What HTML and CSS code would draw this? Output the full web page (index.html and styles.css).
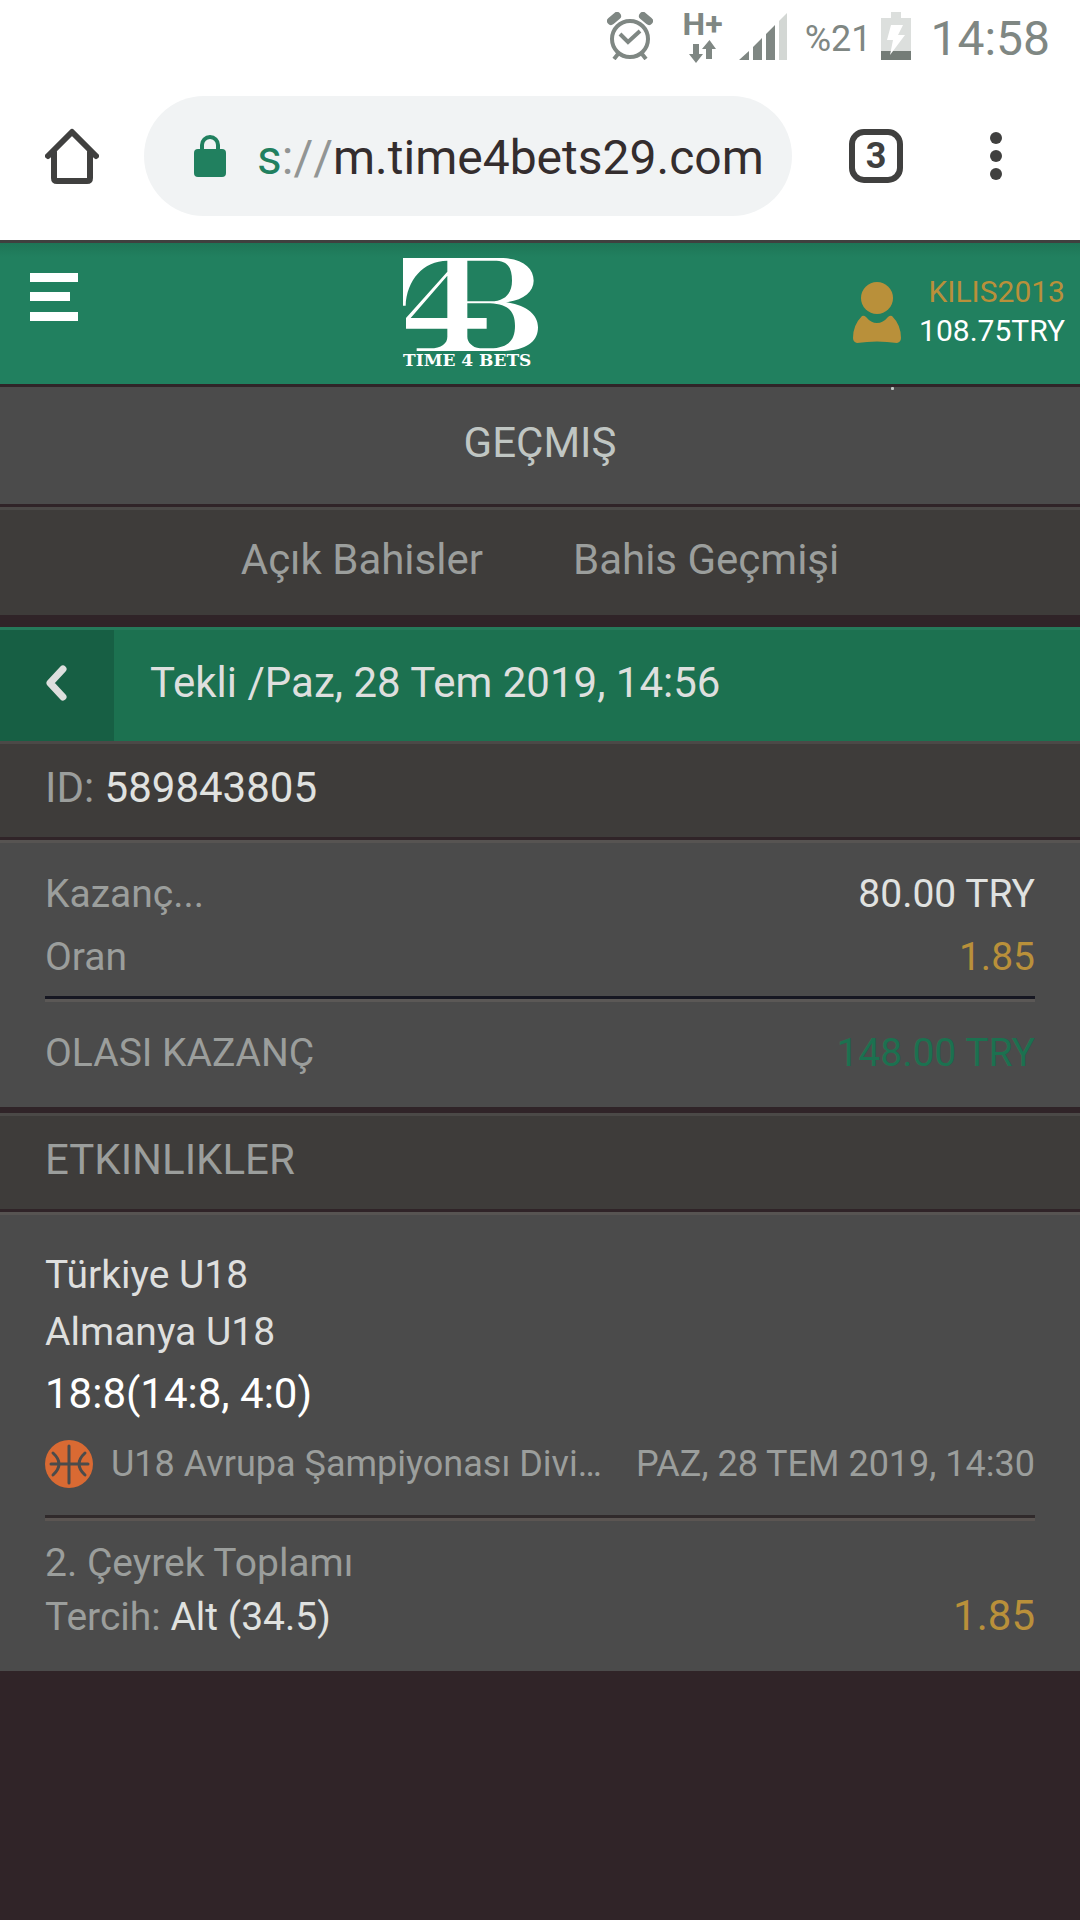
FILE: index.html
```html
<!DOCTYPE html>
<html lang="tr">
<head>
<meta charset="utf-8">
<meta name="viewport" content="width=device-width, initial-scale=1">
<title>Time 4 Bets</title>
<link rel="stylesheet" href="styles.css">
</head>
<body>
<div class="status-bar">
  <svg class="alarm" width="46" height="48" viewBox="0 0 46 48" fill="none" stroke="#7f8783" aria-hidden="true">
    <circle cx="23" cy="27" r="18" stroke-width="4"/>
    <path d="M13 22l8 8 12-11" stroke-width="4"/>
    <path d="M4 9L10 4M42 9L36 4" stroke-width="8" stroke-linecap="round"/>
    <path d="M11 42l-4 5M35 42l4 5" stroke-width="4"/>
  </svg>
  <div class="network">
    <span>H+</span>
    <svg width="28" height="23" viewBox="0 0 28 23" fill="#7f8783" aria-hidden="true"><path d="M4 4h6v10h4l-7 9-7-9h4zM17 19h6V9h4l-6.500-9L13 9h4z"/></svg>
  </div>
  <svg class="signal" width="48" height="48" viewBox="0 0 48 48" fill="#7f8783" aria-hidden="true">
    <path d="M0 48l10-9v9zM14 35l9-9v22h-9zM27 22l9-9v35h-9z"/><path d="M40 9l8-8v47h-8z" fill="#d3d7d4"/>
  </svg>
  <span class="percent">%21</span>
  <svg class="battery" width="30" height="48" viewBox="0 0 30 48" aria-hidden="true">
    <path d="M10 0h10v6h10v33H0V6h10z" fill="#dcdfdd"/><path d="M0 39h30v9H0z" fill="#747c77"/>
    <path d="M10 13h12l-5 10h7L9 43l3-15H6z" fill="#fff"/>
  </svg>
  <span class="clock">14:58</span>
</div>

<div class="browser-bar">
  <button class="plain" aria-label="Home">
    <svg width="54" height="56" viewBox="0 0 54 56" fill="none" stroke="#40403f" stroke-width="6" stroke-linecap="round" stroke-linejoin="round" aria-hidden="true"><path d="M3 28L27 4l24 24M9 24v26q0 3 3 3h30q3 0 3-3V24"/></svg>
  </button>
  <button class="address">
    <svg width="32" height="42" viewBox="0 0 32 42" aria-hidden="true"><rect y="14" width="32" height="28" rx="4" fill="#21805f"/><path d="M8 16v-6a8 8 0 0116 0v6" fill="none" stroke="#21805f" stroke-width="4"/></svg>
    <span class="url"><span class="scheme">s</span><span class="slashes">://</span>m.time4bets29.com</span>
  </button>
  <button class="tab-count">3</button>
  <button class="plain" aria-label="More">
    <svg width="12" height="48" viewBox="0 0 12 48" fill="#40403f" aria-hidden="true"><circle cx="6" cy="6" r="6"/><circle cx="6" cy="24" r="6"/><circle cx="6" cy="42" r="6"/></svg>
  </button>
</div>

<header class="site-header">
  <button class="plain menu" aria-label="Menu">
    <svg width="48" height="48" viewBox="0 0 48 48" fill="#fff" aria-hidden="true"><path d="M0 0h48v9H0zM0 19h40v9H0zM0 39h48v9H0z"/></svg>
  </button>
  <a class="logo" href="#">
    <svg width="135" height="93" viewBox="69 54 405 279" fill="#fff" fill-rule="evenodd" aria-hidden="true">
      <path d="M69 54H370C430 57 461 85 461 122C461 155 430 180 378 187C440 195 474 225 474 262C474 305 440 333 360 333H110V325H150C185 325 202 310 202 290V266H78V234L202 95V62C130 62 80 120 77 197H69ZM202 107L92 234H202ZM262 62V184H330C375 185 396 160 396 122C396 85 385 64 350 62ZM262 190V234H320V266H262V290C262 305 275 322 300 325H330C385 325 405 300 405 258C405 215 385 192 330 190Z"/>
    </svg>
    <span>TIME 4 BETS</span>
  </a>
  <a class="account" href="#">
    <svg width="48" height="61" viewBox="0 0 48 61" fill="#b9903a" aria-hidden="true"><circle cx="24" cy="16" r="16"/><path d="M9 34q2-1 4 1q5 6 11 6t11-6q2-2 4-1q9 9 9 22q0 4-4 5q-20-3-40 0q-4-1-4-5q0-13 9-22z"/></svg>
    <span class="account-text"><span class="user">KILIS2013</span><span>108.75TRY</span></span>
  </a>
</header>

<main>
  <h1 class="page-title">GEÇMIŞ</h1>
  <nav class="tabs">
    <a href="#">Açık Bahisler</a>
    <a href="#">Bahis Geçmişi</a>
  </nav>

  <div class="bet-bar">
    <button class="back" aria-label="Geri">
      <svg width="22" height="36" viewBox="0 0 22 36" fill="none" stroke="#dedfde" stroke-width="7" stroke-linecap="round" stroke-linejoin="round" aria-hidden="true"><path d="M17 4L4 18l13 14"/></svg>
    </button>
    <h2>Tekli /Paz, 28 Tem 2019, 14:56</h2>
  </div>

  <div class="strip">ID: <span class="bright">589843805</span></div>
  <section class="panel totals">
    <div class="row"><span>Kazanç...</span><span class="bright">80.00 TRY</span></div>
    <div class="row"><span>Oran</span><span class="gold">1.85</span></div>
    <div class="row payout"><span>OLASI KAZANÇ</span><span class="green">148.00 TRY</span></div>
  </section>

  <h2 class="strip events-title">ETKINLIKLER</h2>
  <section class="panel event">
    <div class="team">Türkiye U18</div>
    <div class="team">Almanya U18</div>
    <div class="score">18:8(14:8, 4:0)</div>
    <div class="league">
      <svg width="48" height="48" viewBox="0 0 48 48" aria-hidden="true"><circle cx="24" cy="24" r="24" fill="#d96a33"/><path d="M24 6v37M6 24h37M8 13q12 11 0 22M40 13q-12 11 0 22" fill="none" stroke="#4b4b4b" stroke-width="3" stroke-linecap="round"/></svg>
      <span class="league-name">U18 Avrupa Şampiyonası Divi…</span>
      <time>PAZ, 28 TEM 2019, 14:30</time>
    </div>
    <div class="pick">
      <div>2. Çeyrek Toplamı</div>
      <div class="row"><span>Tercih: <span class="bright">Alt (34.5)</span></span><span class="gold odds">1.85</span></div>
    </div>
  </section>
</main>
</body>
</html>
```
FILE: styles.css
```css
* { box-sizing: border-box; }

body {
  margin: 0;
  background: #302428;
  color: #9b9e9c;
  font-family: Roboto, sans-serif;
  font-size: 39px;
  line-height: 48px;
}

h1, h2 { margin: 0; font-weight: 400; }
a { color: inherit; text-decoration: none; }
svg { display: block; flex: none; }

button {
  border: 0;
  padding: 0;
  background: none;
  color: inherit;
  font: inherit;
}

.bright { color: #e0e2e0; }
.gold { color: #b9903a; }
.green { color: #1c7150; }

/* Phone status bar */
.status-bar {
  display: flex;
  justify-content: flex-end;
  align-items: flex-start;
  height: 80px;
  padding: 12px 30px 0 0;
  background: #fff;
  color: #7f8783;
}
.network {
  display: flex;
  flex-direction: column;
  align-items: center;
  gap: 4px;
  margin: 0 16px 0 30px;
  font-size: 32px;
  font-weight: 700;
  line-height: 24px;
}
.percent { margin: 3px 10px 0 18px; font-size: 36px; }
.clock { margin: 3px 0 0 19px; font-size: 48px; }

/* Browser toolbar */
.browser-bar {
  display: flex;
  align-items: center;
  height: 163px;
  padding: 16px 78px 24px 45px;
  border-bottom: 3px solid #40403f;
  background: #fff;
  color: #40403f;
}
.address {
  flex: 1;
  display: flex;
  align-items: center;
  gap: 31px;
  height: 120px;
  margin: 0 57px 0 45px;
  padding: 0 20px 0 50px;
  border-radius: 60px;
  background: #f1f3f4;
  color: #342d2e;
  font-size: 48px;
  white-space: nowrap;
}
.url { padding-top: 3px; }
.scheme { color: #21805f; }
.slashes { color: #929594; font-kerning: none; }
.tab-count {
  width: 54px;
  height: 54px;
  margin-right: 87px;
  border: 6px solid #40403f;
  border-radius: 15px;
  font-size: 36px;
  font-weight: 700;
  line-height: 42px;
}

/* Site header */
.site-header {
  display: flex;
  justify-content: space-between;
  align-items: flex-start;
  height: 144px;
  padding: 15px 15px 0 30px;
  border-bottom: 3px solid #302428;
  background: linear-gradient(#1e7556, #21805f 14px);
  color: #fff;
}
.menu { width: 58px; margin-top: 15px; }
.logo {
  width: 135px;
  font: 700 17px/18px "DejaVu Serif", serif;
  white-space: nowrap;
}
.account {
  display: flex;
  align-items: flex-start;
  gap: 18px;
  margin-top: 14px;
  font-size: 30px;
  line-height: 39px;
  text-align: right;
}
.account svg { margin-top: 10px; }
.account-text { display: flex; flex-direction: column; }
.user { color: #b9903a; }

/* Page title and tabs */
.page-title {
  position: relative;
  padding: 32px 0 37px;
  background: #4b4b4b;
  color: #c0c6c3;
  font-size: 42px;
  text-align: center;
}
.page-title::after {
  content: "";
  position: absolute;
  top: 0;
  right: 186px;
  width: 3px;
  height: 3px;
  border-radius: 1px;
  background: #c0c6c3;
}
.tabs {
  display: flex;
  justify-content: center;
  gap: 90px;
  margin: 3px 0 12px;
  padding: 26px 0 31px;
  border-top: 3px solid #4b4947;
  background: #3e3c3a;
  font-size: 42px;
}

/* Bet details */
.bet-bar {
  display: flex;
  align-items: stretch;
  height: 114px;
  border-top: 3px solid #25795a;
  background: #1c7150;
  color: #dedfde;
}
.back {
  display: grid;
  place-items: center;
  width: 114px;
  padding-bottom: 5px;
  background: #175f44;
}
.bet-bar h2 { padding: 29px 36px; font-size: 42px; }

.strip {
  padding: 20px 45px 25px;
  border-top: 3px solid #4b4947;
  background: #3e3c3a;
  font-size: 42px;
}
.panel {
  margin-top: 3px;
  border-top: 3px solid #575452;
  background: #4b4b4b;
}
.row { display: flex; justify-content: space-between; align-items: baseline; }

.totals { padding: 20px 45px 0; }
.totals .row { line-height: 63px; }
.totals .payout {
  margin-top: 7px;
  padding: 29px 0 28px;
  border-top: 3px solid #161722;
  box-shadow: inset 0 3px #5b5856;
  line-height: 51px;
}

.events-title { margin-top: 6px; }
.event { padding: 32px 45px 27px; }
.team { color: #dedfde; line-height: 57px; }
.score { color: #fff; font-size: 42px; line-height: 66px; }
.league {
  display: flex;
  align-items: center;
  margin-top: 13px;
  padding-bottom: 27px;
  border-bottom: 3px solid #302a2b;
  font-size: 36px;
  white-space: nowrap;
}
.league-name { margin-left: 18px; }
.league time { margin-left: auto; }
.pick {
  padding-top: 18px;
  box-shadow: inset 0 3px #5b5552;
  line-height: 54px;
}
.odds { font-size: 42px; line-height: 48px; }
```
